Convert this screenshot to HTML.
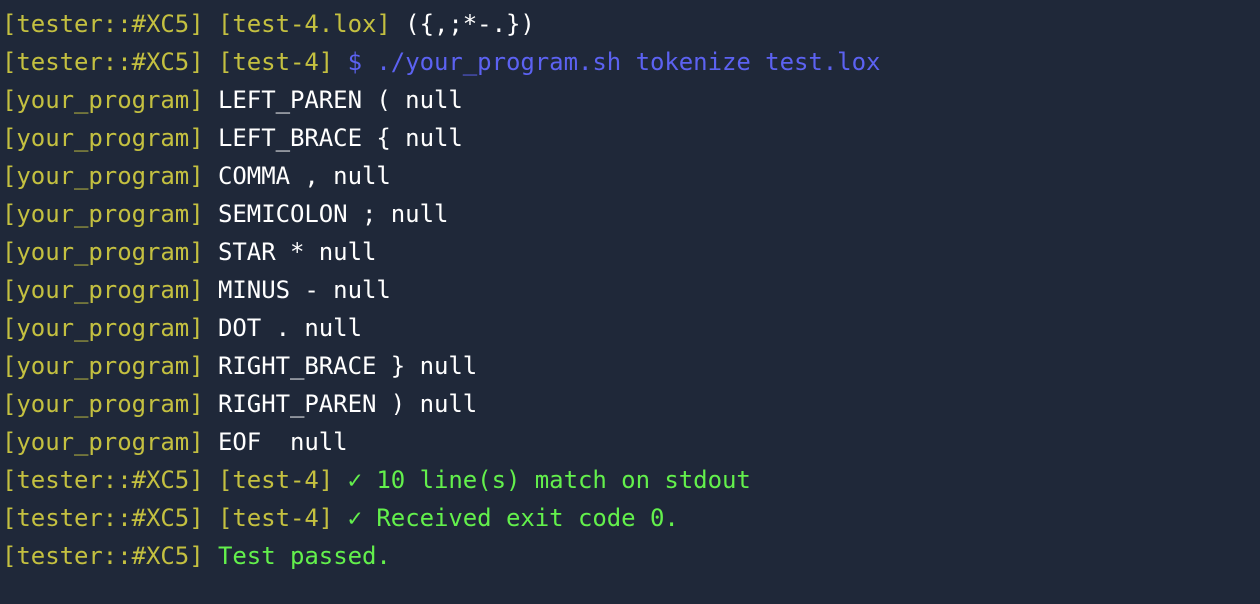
<!DOCTYPE html>
<html><head><meta charset="utf-8"><style>
html,body{margin:0;padding:0;width:1260px;height:604px;background:#1f2839;overflow:hidden}
pre{margin:0;padding:5px 0 0 2px;font-family:"DejaVu Sans Mono","Liberation Mono",monospace;font-size:24px;line-height:38px;letter-spacing:-0.05px;color:#fff;white-space:pre}
.y{color:#c4c040}.b{color:#5c62f2}.g{color:#63f04c}
</style></head><body><pre><span class="y">[tester::#XC5] [test-4.lox]</span> ({,;*-.})
<span class="y">[tester::#XC5] [test-4]</span> <span class="b">$ ./your_program.sh tokenize test.lox</span>
<span class="y">[your_program]</span> LEFT_PAREN ( null
<span class="y">[your_program]</span> LEFT_BRACE { null
<span class="y">[your_program]</span> COMMA , null
<span class="y">[your_program]</span> SEMICOLON ; null
<span class="y">[your_program]</span> STAR * null
<span class="y">[your_program]</span> MINUS - null
<span class="y">[your_program]</span> DOT . null
<span class="y">[your_program]</span> RIGHT_BRACE } null
<span class="y">[your_program]</span> RIGHT_PAREN ) null
<span class="y">[your_program]</span> EOF  null
<span class="y">[tester::#XC5] [test-4]</span> <span class="g">✓ 10 line(s) match on stdout</span>
<span class="y">[tester::#XC5] [test-4]</span> <span class="g">✓ Received exit code 0.</span>
<span class="y">[tester::#XC5]</span> <span class="g">Test passed.</span></pre></body></html>
